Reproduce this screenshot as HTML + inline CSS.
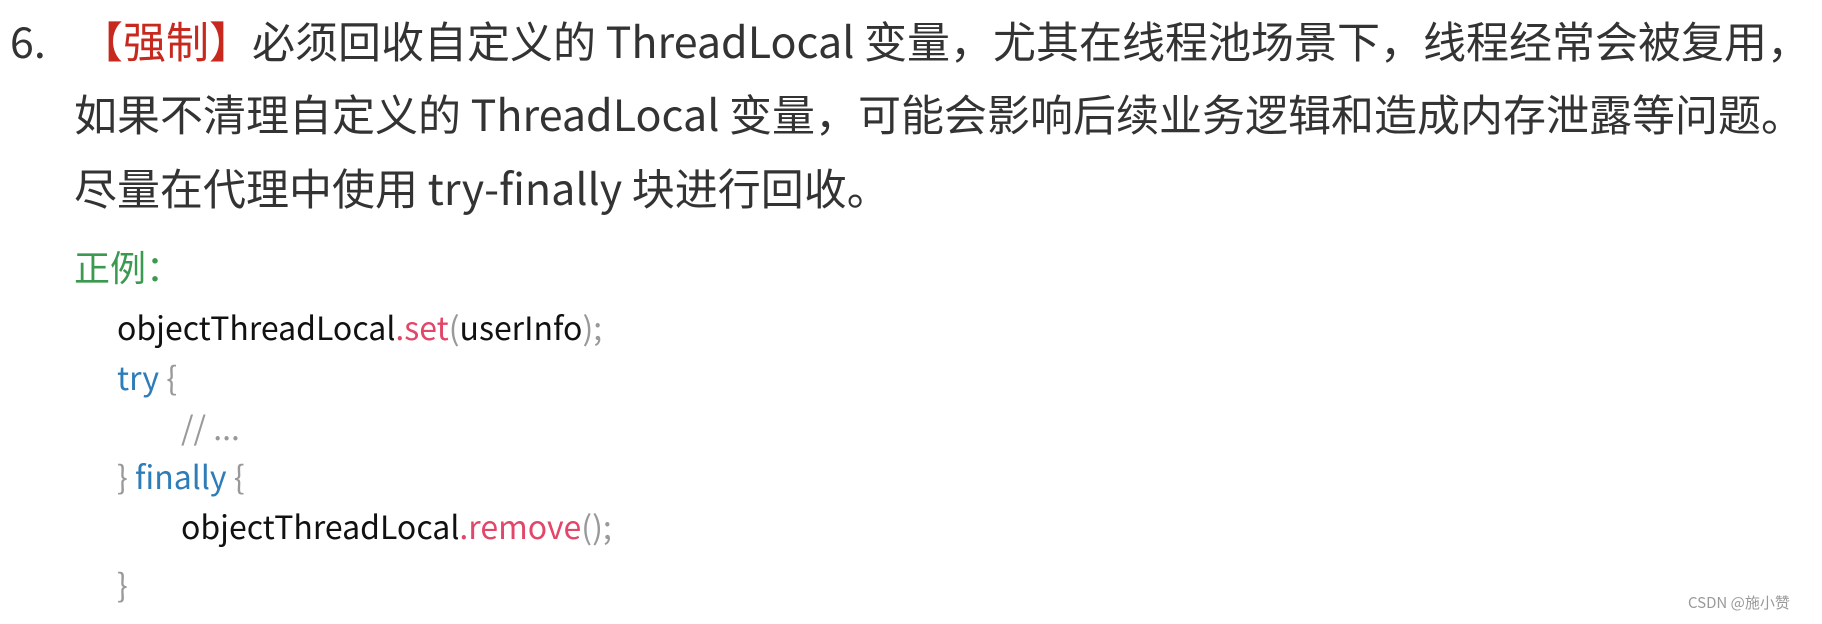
<!DOCTYPE html>
<html><head><meta charset="utf-8"><style>
html,body{margin:0;padding:0;background:#fff;width:1822px;height:624px;overflow:hidden}
.l{position:absolute;white-space:nowrap;font-family:"Noto Sans CJK SC","Liberation Sans",sans-serif;color:#333;line-height:1}
.m{font-size:43px}
.r{color:#c7291e}
.g{color:#3c9a50;font-size:36px}
.c{font-size:32px;color:#111}
.b{color:#2f7db8}
.p{color:#e2476a}
.s{color:#999}
</style></head><body>
<div class="l m" style="left:10px;top:19px">6.</div>
<div class="l m" style="left:80px;top:19px"><span class="r">【强制】</span>必须回收自定义的 ThreadLocal 变量，尤其在线程池场景下，线程经常会被复用，</div>
<div class="l m" style="left:74px;top:92px">如果不清理自定义的 ThreadLocal 变量，可能会影响后续业务逻辑和造成内存泄露等问题。</div>
<div class="l m" style="left:74px;top:166px">尽量在代理中使用 try-finally 块进行回收。</div>
<div class="l g" style="left:74px;top:248px">正例：</div>
<div class="l c" style="left:117px;top:311px">objectThreadLocal<span class="p">.set</span><span class="s">(</span>userInfo<span class="s">);</span></div>
<div class="l c" style="left:117px;top:361px"><span class="b">try</span> <span class="s">{</span></div>
<div class="l c s" style="left:181px;top:411px">// ...</div>
<div class="l c" style="left:117px;top:460px"><span class="s">}</span> <span class="b">finally</span> <span class="s">{</span></div>
<div class="l c" style="left:181px;top:510px">objectThreadLocal<span class="p">.remove</span><span class="s">();</span></div>
<div class="l c s" style="left:117px;top:568px">}</div>
<div class="l" style="left:1688px;top:595px;font-size:15px;color:#999">CSDN @施小赞</div>
</body></html>
